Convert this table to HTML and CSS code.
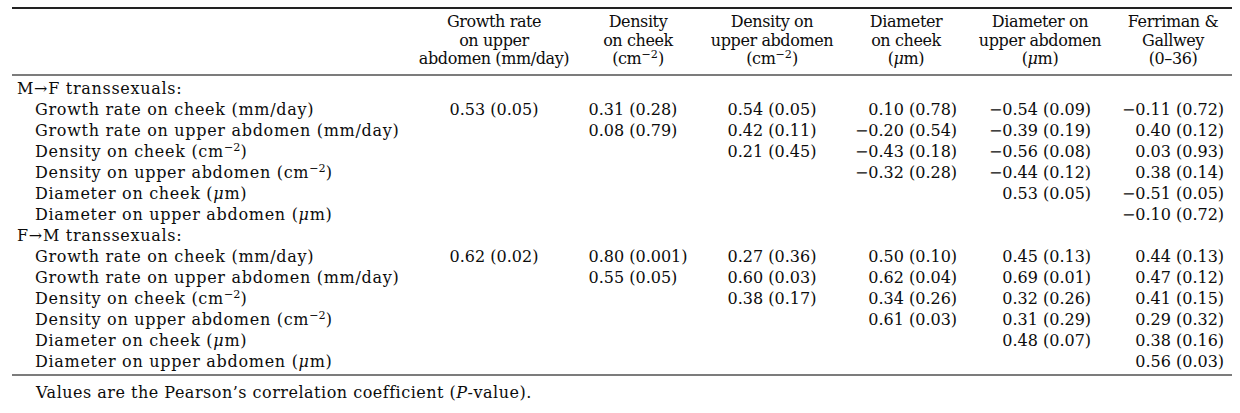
FILE: index.html
```html
<!DOCTYPE html>
<html lang="en">
<head>
<meta charset="utf-8">
<title>Correlations</title>
<link rel="stylesheet" href="styles.css">
</head>
<body>
<div class="table">
  <div class="head">
    <div class="h lab"></div>
    <div class="h c1">Growth rate<br>on upper<br>abdomen (mm/day)</div>
    <div class="h">Density<br>on cheek<br>(cm<sup>−2</sup>)</div>
    <div class="h">Density on<br>upper abdomen<br>(cm<sup>−2</sup>)</div>
    <div class="h">Diameter<br>on cheek<br>(<i>μ</i>m)</div>
    <div class="h">Diameter on<br>upper abdomen<br>(<i>μ</i>m)</div>
    <div class="h c6">Ferriman &amp;<br>Gallwey<br>(0–36)</div>
  </div>
  <div class="body">
    <div class="col lab">
      <div class="r grp">M→F transsexuals:</div>
      <div class="r sub">Growth rate on cheek (mm/day)</div>
      <div class="r sub">Growth rate on upper abdomen (mm/day)</div>
      <div class="r sub">Density on cheek (cm<sup>−2</sup>)</div>
      <div class="r sub">Density on upper abdomen (cm<sup>−2</sup>)</div>
      <div class="r sub">Diameter on cheek (<i>μ</i>m)</div>
      <div class="r sub">Diameter on upper abdomen (<i>μ</i>m)</div>
      <div class="r grp">F→M transsexuals:</div>
      <div class="r sub">Growth rate on cheek (mm/day)</div>
      <div class="r sub">Growth rate on upper abdomen (mm/day)</div>
      <div class="r sub">Density on cheek (cm<sup>−2</sup>)</div>
      <div class="r sub">Density on upper abdomen (cm<sup>−2</sup>)</div>
      <div class="r sub">Diameter on cheek (<i>μ</i>m)</div>
      <div class="r sub">Diameter on upper abdomen (<i>μ</i>m)</div>
    </div>
    <div class="col c1">
      <div class="r"></div>
      <div class="r">0.53 (0.05)</div>
      <div class="r"></div><div class="r"></div><div class="r"></div><div class="r"></div><div class="r"></div>
      <div class="r"></div>
      <div class="r">0.62 (0.02)</div>
      <div class="r"></div><div class="r"></div><div class="r"></div><div class="r"></div><div class="r"></div>
    </div>
    <div class="col">
      <div class="r"></div>
      <div class="r">0.31 (0.28)</div>
      <div class="r">0.08 (0.79)</div>
      <div class="r"></div><div class="r"></div><div class="r"></div><div class="r"></div>
      <div class="r"></div>
      <div class="r">0.80 (0.001)</div>
      <div class="r">0.55 (0.05)</div>
      <div class="r"></div><div class="r"></div><div class="r"></div><div class="r"></div>
    </div>
    <div class="col">
      <div class="r"></div>
      <div class="r">0.54 (0.05)</div>
      <div class="r">0.42 (0.11)</div>
      <div class="r">0.21 (0.45)</div>
      <div class="r"></div><div class="r"></div><div class="r"></div>
      <div class="r"></div>
      <div class="r">0.27 (0.36)</div>
      <div class="r">0.60 (0.03)</div>
      <div class="r">0.38 (0.17)</div>
      <div class="r"></div><div class="r"></div><div class="r"></div>
    </div>
    <div class="col">
      <div class="r"></div>
      <div class="r pos">0.10 (0.78)</div>
      <div class="r">−0.20 (0.54)</div>
      <div class="r">−0.43 (0.18)</div>
      <div class="r">−0.32 (0.28)</div>
      <div class="r"></div><div class="r"></div>
      <div class="r"></div>
      <div class="r pos">0.50 (0.10)</div>
      <div class="r pos">0.62 (0.04)</div>
      <div class="r pos">0.34 (0.26)</div>
      <div class="r pos">0.61 (0.03)</div>
      <div class="r"></div><div class="r"></div>
    </div>
    <div class="col">
      <div class="r"></div>
      <div class="r">−0.54 (0.09)</div>
      <div class="r">−0.39 (0.19)</div>
      <div class="r">−0.56 (0.08)</div>
      <div class="r">−0.44 (0.12)</div>
      <div class="r pos">0.53 (0.05)</div>
      <div class="r"></div>
      <div class="r"></div>
      <div class="r pos">0.45 (0.13)</div>
      <div class="r pos">0.69 (0.01)</div>
      <div class="r pos">0.32 (0.26)</div>
      <div class="r pos">0.31 (0.29)</div>
      <div class="r pos">0.48 (0.07)</div>
      <div class="r"></div>
    </div>
    <div class="col c6">
      <div class="r"></div>
      <div class="r">−0.11 (0.72)</div>
      <div class="r pos">0.40 (0.12)</div>
      <div class="r pos">0.03 (0.93)</div>
      <div class="r pos">0.38 (0.14)</div>
      <div class="r">−0.51 (0.05)</div>
      <div class="r">−0.10 (0.72)</div>
      <div class="r"></div>
      <div class="r pos">0.44 (0.13)</div>
      <div class="r pos">0.47 (0.12)</div>
      <div class="r pos">0.41 (0.15)</div>
      <div class="r pos">0.29 (0.32)</div>
      <div class="r pos">0.38 (0.16)</div>
      <div class="r pos">0.56 (0.03)</div>
    </div>
  </div>
  <div class="foot">Values are the Pearson’s correlation coefficient (<i>P</i>-value).</div>
</div>
</body>
</html>
```

FILE: styles.css
```css
html, body {
  margin: 0;
  padding: 0;
  background: #fff;
}
body {
  font-family: "DejaVu Serif", "Liberation Serif", serif;
  font-size: 16px;
  color: #0c0c0c;
}
.table {
  width: 1220px;
  margin: 7px 0 0 12px;
}
.head, .body {
  display: grid;
  grid-template-columns: 415px 144px repeat(4, 134px) 125px;
}
.head {
  border-top: 2px solid #222;
  border-bottom: 2px solid #7c7c7c;
  padding: 4px 0 5px;
  line-height: 18.5px;
  letter-spacing: -0.4px;
}
.h {
  text-align: center;
  white-space: nowrap;
  justify-self: center;
}
.h.lab { justify-self: start; }
.c1 { padding-right: 10px; }
.c6 { padding-left: 7px; }
.body {
  padding: 2px 0 2px;
  border-bottom: 2px solid #7c7c7c;
}
.col {
  display: flex;
  flex-direction: column;
  justify-self: center;
}
.col.lab {
  justify-self: start;
  letter-spacing: 0.7px;
}
.r {
  height: 21px;
  line-height: 21px;
  white-space: nowrap;
}
.pos::before {
  content: "−";
  visibility: hidden;
}
.grp { padding-left: 5px; }
.sub { padding-left: 23px; }
sup {
  font-size: 0.7em;
  line-height: 0;
  vertical-align: 0.5em;
  letter-spacing: 0;
}
.foot {
  padding: 6px 0 0 24px;
  line-height: 21px;
  letter-spacing: 0.5px;
}
```
